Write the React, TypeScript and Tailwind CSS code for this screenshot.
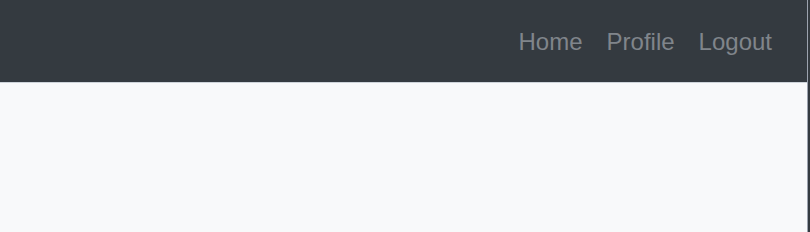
export default function App() {
  return (
    <div className="flex h-[232px] w-[810px] bg-[#343a40]" style={{ fontFamily: '"Liberation Sans", Arial, sans-serif' }}>
      <div className="flex flex-1 flex-col border-r border-[#9ca3af]">
        <header className="flex h-[82px] items-center justify-end bg-[#343a40] pr-[35px] pt-[2px]">
          <nav className="flex items-center gap-[24px] text-[24px] leading-none text-[#80858b]">
            <a>Home</a>
            <a>Profile</a>
            <a>Logout</a>
          </nav>
        </header>
        <main className="flex-1 border-t border-[#ced4da] bg-[#f8f9fa]" />
      </div>
      <div className="w-[2px]" />
    </div>
  );
}
